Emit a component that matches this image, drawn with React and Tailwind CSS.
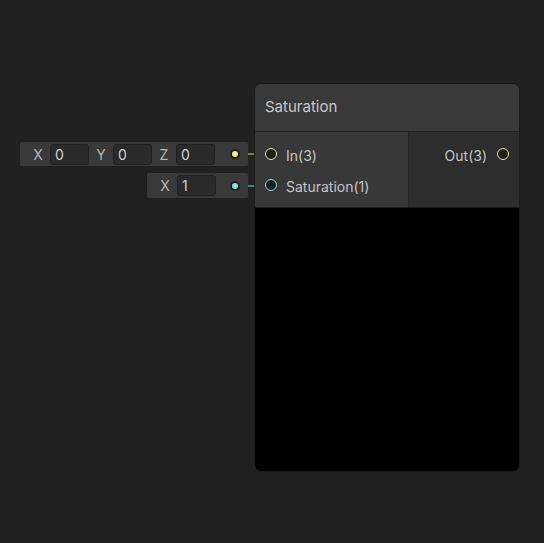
import React from 'react';

const font = { fontFamily: 'Inter, "Noto Sans", sans-serif' };

const Field = ({ label, value }) => (
  <div className="flex items-center">
    <span className="w-[24px] text-center text-[14px] text-[#b4b4b4]">{label}</span>
    <div className="flex h-[21px] w-[39px] items-center rounded-[3px] border border-[#202020] bg-[#2a2a2a] pl-[4px] text-[14px] text-[#d2d2d2]">
      {value}
    </div>
  </div>
);

const InputBar = ({ className, fields, color, dim }) => (
  <div className={`absolute flex items-center ${className}`}>
    <div className="flex h-full flex-1 items-center rounded-[2px] bg-[#393939] pl-[6px]">
      {fields.map((f) => (
        <Field key={f.label} label={f.label} value={f.value} />
      ))}
      <div className="ml-auto mr-[8px] flex h-[10px] w-[10px] items-center justify-center rounded-full bg-[#1c1c1c]">
        <div className={`h-[6px] w-[6px] rounded-full ${color}`} />
      </div>
    </div>
    <div className={`relative h-[2px] w-[18px] ${dim}`}>
      <div className={`absolute left-[6px] top-[-1px] h-[4px] w-[5px] ${color}`} />
    </div>
  </div>
);

const Port = ({ ring }) => (
  <div className={`h-[12px] w-[12px] rounded-full border-[1.5px] bg-[#1e1e1e] ${ring}`} />
);

export default function App() {
  return (
    <div className="relative h-[543px] w-[544px] overflow-hidden bg-[#202020]" style={font}>
      <InputBar
        className="left-[20px] top-[142px] h-[24px] w-[246px]"
        fields={[
          { label: 'X', value: '0' },
          { label: 'Y', value: '0' },
          { label: 'Z', value: '0' },
        ]}
        color="bg-[#eef08a]"
        dim="bg-[#7c7c54]"
      />
      <InputBar
        className="left-[147px] top-[173px] h-[25px] w-[119px]"
        fields={[{ label: 'X', value: '1' }]}
        color="bg-[#7fe0e6]"
        dim="bg-[#4a8088]"
      />

      <div className="absolute left-[254px] top-[83px] flex h-[389px] w-[266px] flex-col overflow-hidden rounded-[7px] border border-[#1a1a1a]">
        <div className="flex h-[48px] items-center border-b border-[#242424] bg-[#393939] px-[10px] text-[15px] text-[#c8c8c8]">
          Saturation
        </div>
        <div className="flex h-[76px] border-b border-[#1e1e1e]">
          <div className="flex w-[154px] flex-col border-r border-[#272727] bg-[#383838] pt-[6px]">
            <div className="flex h-[31px] items-center gap-[9px] pl-[10px] text-[14px] text-[#c4c4c4]">
              <Port ring="border-[#e9eb8a]" />
              <span className="pt-[3px]">In(3)</span>
            </div>
            <div className="flex h-[31px] items-center gap-[9px] pl-[10px] text-[14px] text-[#c4c4c4]">
              <Port ring="border-[#80dde2]" />
              <span className="pt-[3px]">Saturation(1)</span>
            </div>
          </div>
          <div className="flex flex-1 flex-col bg-[#2d2d2d] pt-[6px]">
            <div className="flex h-[31px] items-center justify-end gap-[10px] pr-[10px] text-[14px] text-[#c4c4c4]">
              <span className="pt-[3px]">Out(3)</span>
              <Port ring="border-[#e9eb8a]" />
            </div>
          </div>
        </div>
        <div className="flex-1 bg-black" />
      </div>
    </div>
  );
}
